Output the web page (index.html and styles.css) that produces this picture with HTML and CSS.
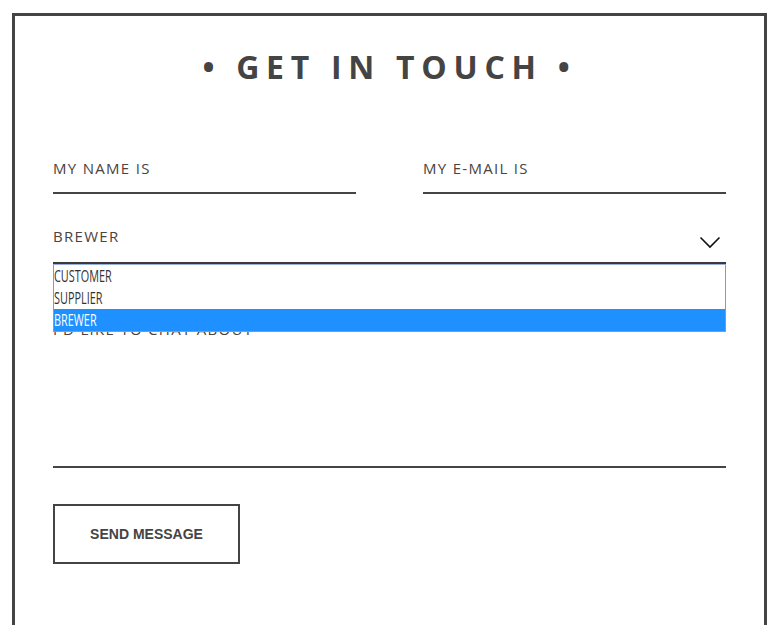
FILE: index.html
```html
<!DOCTYPE html>
<html lang="en">
<head>
<meta charset="utf-8">
<title>Get in touch</title>
<link rel="stylesheet" href="styles.css">
</head>
<body>
<div class="page">
  <form class="card">
    <h1 class="title">• GET IN TOUCH •</h1>
    <div class="row">
      <div class="field">MY NAME IS</div>
      <div class="field">MY E-MAIL IS</div>
    </div>
    <div class="field select-field">
      <span>BREWER</span>
      <svg class="chevron" width="22" height="13" viewBox="0 0 22 13"><polyline points="1.5,1.5 11,11 20.5,1.5" fill="none" stroke="#111" stroke-width="1.6"/></svg>
      <ul class="dropdown">
        <li class="option"><span>CUSTOMER</span></li>
        <li class="option"><span>SUPPLIER</span></li>
        <li class="option selected"><span>BREWER</span></li>
      </ul>
    </div>
    <div class="field message-field">I'D LIKE TO CHAT ABOUT</div>
    <button type="button" class="send">SEND MESSAGE</button>
  </form>
</div>
</body>
</html>
```
FILE: styles.css
```css
html, body {
  margin: 0;
  background: #fff;
}
.page {
  padding: 13px 7px 0 12px;
}
.card {
  box-sizing: border-box;
  width: 755px;
  min-height: 700px;
  border: 3px solid #444;
  border-bottom: none;
  padding: 30px 38px 80px;
}
.title {
  margin: 0 0 70px;
  font: 700 32px/42px "Open Sans", sans-serif;
  letter-spacing: 0.21em;
  text-align: center;
  color: #444;
}
.row {
  display: grid;
  grid-template-columns: 303px 303px;
  justify-content: space-between;
}
.field {
  padding-bottom: 14px;
  border-bottom: 2px solid #444;
  font: 400 15px/20px "Open Sans", sans-serif;
  letter-spacing: 1.3px;
  color: #4a4441;
}
.select-field {
  position: relative;
  margin-top: 32px;
  padding-bottom: 16px;
  display: flex;
  justify-content: space-between;
  align-items: flex-start;
  border-bottom-color: #3a3a3a;
}
.chevron {
  display: block;
  margin: 10px 5px -3px 0;
}
.dropdown {
  position: absolute;
  top: 100%;
  left: 0;
  right: 0;
  margin: 2px 0 0;
  padding: 0;
  list-style: none;
  background: #fff;
  border: 1px solid #7d9bd1;
  border-top-color: #9ab0dc;
  z-index: 2;
}
.option {
  height: 22px;
  font: 400 16px/22px "Open Sans", sans-serif;
  letter-spacing: 0;
  color: #333;
  white-space: nowrap;
}
.option span {
  display: inline-block;
  transform: scaleX(0.68);
  transform-origin: left center;
}
.option.selected {
  background: #1e90ff;
  color: #fff;
}
.message-field {
  margin-top: 55px;
  padding-bottom: 127px;
}
.send {
  display: block;
  box-sizing: border-box;
  margin-top: 36px;
  width: 187px;
  height: 60px;
  border: 2px solid #444;
  background: #fff;
  font: 700 14px "Liberation Sans", Arial, sans-serif;
  color: #444;
  padding: 0;
}
```
